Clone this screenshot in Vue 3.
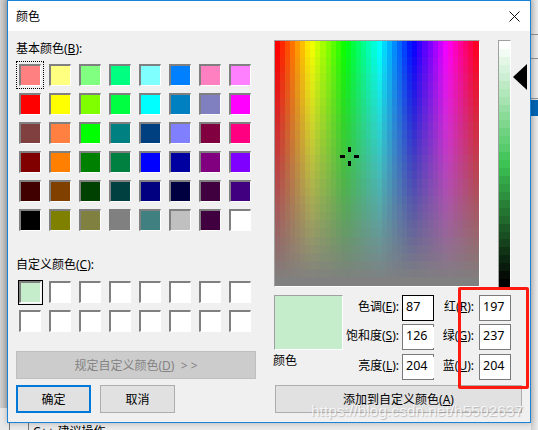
<script setup>
import { ref, onMounted } from 'vue'

const basic = [
  '#ff8080','#ffff80','#80ff80','#00ff80','#80ffff','#0080ff','#ff80c0','#ff80ff',
  '#ff0000','#ffff00','#80ff00','#00ff40','#00ffff','#0080c0','#8080c0','#ff00ff',
  '#804040','#ff8040','#00ff00','#008080','#004080','#8080ff','#800040','#ff0080',
  '#800000','#ff8000','#008000','#008040','#0000ff','#0000a0','#800080','#8000ff',
  '#400000','#804000','#004000','#004040','#000080','#000040','#400040','#400080',
  '#000000','#808000','#808040','#808080','#408080','#c0c0c0','#400040','#ffffff'
]
const custom = Array.from({ length: 16 }, (_, i) => (i === 0 ? '#c5edcc' : '#ffffff'))
const lumRows = Array.from({ length: 31 }, (_, i) => {
  const l = Math.round(100 - (i * 100) / 30)
  return `hsl(130.5deg 52.5% ${l}%)`
})

const fields = [
  { label: '色调', key: 'E', value: 87, focus: true, open: false, l2: '红', k2: 'R', v2: 197 },
  { label: '饱和度', key: 'S', value: 126, focus: false, open: true, l2: '绿', k2: 'G', v2: 237 },
  { label: '亮度', key: 'L', value: 204, focus: false, open: true, l2: '蓝', k2: 'U', v2: 204 }
]

const spectrum = ref(null)
onMounted(() => {
  const c = spectrum.value
  const ctx = c.getContext('2d')
  const cols = 40
  const rows = 30
  for (let y = 0; y < rows; y++) {
    for (let x = 0; x < cols; x++) {
      const h = (x / cols) * 360
      const s = 100 - (y / (rows - 1)) * 100
      ctx.fillStyle = `hsl(${h}deg ${s}% 50%)`
      const x0 = Math.floor((x * c.width) / cols)
      const x1 = Math.floor(((x + 1) * c.width) / cols)
      const y0 = Math.floor((y * c.height) / rows)
      const y1 = Math.floor(((y + 1) * c.height) / rows)
      ctx.fillRect(x0, y0, x1 - x0, y1 - y0)
    }
  }
})
</script>

<template>
  <div class="page">
    <div class="backdrop-left"></div>
    <div class="backdrop-right">
      <i class="line l1"></i><i class="line l2"></i><i class="line l3"></i><i class="selected"></i>
    </div>
    <div class="backdrop-bottom"><i class="vline v1"></i><i class="vline v2"></i><span class="under">C++ 建议操作</span></div>

    <section class="dialog">
      <header class="titlebar">
        <span>颜色</span>
        <svg class="close" width="11" height="11" viewBox="0 0 11 11"><path d="M.5.5l10 10M10.5.5l-10 10" stroke="#111" stroke-width="1" fill="none"/></svg>
      </header>
      <div class="body">
        <div class="left">
          <div class="lbl first">基本颜色(<u>B</u>):</div>
          <div class="swatches">
            <div v-for="(c, i) in basic" :key="i" class="swatch" :class="{ dotted: i === 0 }">
              <div class="fill" :style="{ background: c }"></div>
            </div>
          </div>
          <div class="lbl second">自定义颜色(<u>C</u>):</div>
          <div class="swatches customs">
            <div v-for="(c, i) in custom" :key="i" class="swatch" :class="{ chosen: i === 0 }">
              <div class="fill" :style="{ background: c }"></div>
            </div>
          </div>
          <button class="btn disabled">规定自定义颜色(<u>D</u>)&nbsp;&nbsp;&gt;&nbsp;&gt;</button>
          <div class="actions">
            <button class="btn primary">确定</button>
            <button class="btn">取消</button>
          </div>
        </div>

        <div class="right">
          <div class="pickers">
            <div class="spectrum-wrap">
              <canvas ref="spectrum" class="spectrum" width="204" height="245"></canvas>
              <div class="cross"><i class="c-t"></i><i class="c-b"></i><i class="c-l"></i><i class="c-r"></i></div>
            </div>
            <div class="lumbar">
              <div v-for="(c, i) in lumRows" :key="i" class="lumrow" :style="{ background: c }"></div>
            </div>
            <div class="arrow"></div>
          </div>
          <div class="values">
            <div class="preview-col">
              <div class="preview"></div>
              <div class="caption">颜色</div>
            </div>
            <div class="fields">
              <template v-for="f in fields" :key="f.key">
                <span class="flabel">{{ f.label }}(<u>{{ f.key }}</u>):</span>
                <div class="input" :class="{ focus: f.focus, open: f.open }">{{ f.value }}</div>
                <span class="flabel second-label">{{ f.l2 }}(<u>{{ f.k2 }}</u>):</span>
                <div class="input">{{ f.v2 }}</div>
              </template>
            </div>
          </div>
          <button class="btn add">添加到自定义颜色(<u>A</u>)</button>
        </div>
      </div>
    </section>

    <div class="redbox"></div>
    <div class="watermark">https://blog.csdn.net/h5502637</div>
  </div>
</template>

<style>
html, body { margin: 0; padding: 0; background: #fff; }
</style>

<style scoped>
.page {
  position: relative;
  width: 538px;
  height: 430px;
  overflow: hidden;
  background: #f4f4f4;
  font-family: "Noto Sans", "Noto Sans CJK SC", sans-serif;
  font-size: 12px;
  color: #000;
}
.backdrop-left {
  position: absolute;
  left: 0; top: 0;
  width: 7px; height: 408px;
  background: linear-gradient(90deg, #d2d2d2, #b4b4b4);
}
.backdrop-right {
  position: absolute;
  left: 531px; top: 0;
  width: 7px; height: 430px;
  background: linear-gradient(90deg, #cfcfcf, #ececec);
}
.line { position: absolute; left: 0; width: 7px; height: 1px; background: #8f8f8f; }
.l1 { top: 34px; }
.l2 { top: 58px; }
.l3 { top: 98px; }
.selected { position: absolute; left: 0; top: 100px; width: 7px; height: 16px; background: #0063b1; }
.backdrop-bottom {
  position: absolute;
  left: 0; top: 408px;
  width: 531px; height: 22px;
  background: #e9e9e9;
}
.vline { position: absolute; top: 15px; width: 1px; height: 8px; background: #777; }
.v1 { left: 9px; }
.v2 { left: 28px; }
.under { position: absolute; left: 33px; top: 16px; line-height: 16px; }

.dialog {
  position: absolute;
  left: 7px; top: 0;
  width: 522px;
  height: 421px;
  border: 1px solid #1883d7;
  background: #f0f0f0;
  display: flex;
  flex-direction: column;
  box-shadow: 0 0 6px rgba(0, 0, 0, .25);
}
.titlebar {
  height: 30px;
  flex: none;
  background: #fff;
  padding: 0 10px 0 8px;
  display: flex;
  align-items: center;
  justify-content: space-between;
}
.close { display: block; }
.body {
  flex: 1;
  display: flex;
  gap: 18px;
  padding-left: 8px;
}
.left { width: 240px; flex: none; display: flex; flex-direction: column; }
.lbl { line-height: 16px; height: 16px; }
.first { margin-top: 10px; }
.second { margin-top: 26px; }
.swatches {
  margin: 7px 0 0 3px;
  display: grid;
  grid-template-columns: repeat(8, 22px);
  grid-auto-rows: 22px;
  column-gap: 8px;
  row-gap: 7px;
}
.customs { margin-top: 8px; }
.swatch {
  position: relative;
  box-sizing: border-box;
  border: 1px solid;
  border-width: 2px 1px 1px 2px;
  border-color: #808080 #fff #fff #808080;
}
.fill { width: 100%; height: 100%; }
.dotted::after {
  content: "";
  position: absolute;
  left: -5px; top: -5px; right: -4px; bottom: -4px;
  border: 1px dotted #000;
}
.chosen::after {
  content: "";
  position: absolute;
  left: -3px; top: -3px; right: -3px; bottom: -3px;
  border: 1px solid #000;
}
.btn {
  box-sizing: border-box;
  height: 28px;
  padding: 0;
  border: 1px solid #adadad;
  background: #e1e1e1;
  font: inherit;
  color: #000;
}
.disabled {
  margin-top: 19px;
  background: #ccc;
  border-color: #bfbfbf;
  color: #838383;
  width: 240px;
}
.actions { margin-top: 6px; display: flex; gap: 9px; }
.actions .btn { width: 75px; }
.primary { border: 2px solid #0078d7; }

.right { width: 248px; flex: none; display: flex; flex-direction: column; }
.pickers { position: relative; margin-top: 9px; display: flex; gap: 18px; height: 247px; }
.spectrum-wrap {
  position: relative;
  width: 206px;
  height: 247px;
  box-sizing: border-box;
  border-style: solid;
  border-width: 1px;
  border-color: #a0a0a0 #fff #fff #a0a0a0;
}
.spectrum { display: block; width: 204px; height: 245px; }
.cross { position: absolute; left: 74px; top: 115px; width: 1px; height: 1px; }
.cross i { position: absolute; background: #000; }
.c-t, .c-b { width: 3px; height: 5px; left: -1px; }
.c-l, .c-r { width: 5px; height: 3px; top: -1px; }
.c-t { top: -9px; } .c-b { top: 5px; }
.c-l { left: -9px; } .c-r { left: 5px; }
.lumbar {
  width: 13px;
  height: 247px;
  box-sizing: border-box;
  border-style: solid;
  border-width: 1px 1px 0 1px;
  border-color: #a0a0a0 #fff #fff #a0a0a0;
  display: flex;
  flex-direction: column;
  overflow: hidden;
}
.lumrow { flex: 1; }
.arrow {
  position: absolute;
  left: 239px; top: 24px;
  width: 0; height: 0;
  border-style: solid;
  border-width: 13.5px 14px 13.5px 0;
  border-color: transparent #000 transparent transparent;
}
.values { margin-top: 8px; display: flex; height: 85px; }
.preview-col { width: 69px; flex: none; }
.preview {
  box-sizing: border-box;
  height: 55px;
  background: #c5edcc;
  border-style: solid;
  border-width: 1px;
  border-color: #a0a0a0 #fff #fff #a0a0a0;
}
.caption { margin: 3px 0 0 -1px; line-height: 16px; }
.fields {
  display: grid;
  grid-template-columns: 59px 32px 45px 32px;
  grid-template-rows: 29px 30px 26px;
}
.flabel { text-align: right; padding-right: 3px; line-height: 24px; white-space: nowrap; }
.second-label { padding-right: 5px; }
.input {
  position: relative;
  box-sizing: border-box;
  height: 26px;
  background: #fff;
  border: 1px solid #7a7a7a;
  padding-left: 3px;
  line-height: 21px;
  font-size: 12.5px;
}
.input.focus { border-color: #000; }
.input.open { border-right-color: #fff; }
.input.open::after {
  content: "";
  position: absolute;
  right: -1px; top: -1px; bottom: -1px;
  width: 1px;
  background: linear-gradient(#7a7a7a 3px, transparent 3px, transparent calc(100% - 2px), #7a7a7a 0);
}
.add { margin-top: 5px; width: 247px; margin-left: 1px; }

.redbox {
  position: absolute;
  left: 458px; top: 287px;
  width: 65px; height: 96px;
  border: 3px solid #ff1a0f;
  border-radius: 2px;
}
.watermark {
  position: absolute;
  left: 311px; top: 402px;
  font-family: "Liberation Sans", sans-serif;
  font-size: 15.5px;
  line-height: 18px;
  white-space: nowrap;
  color: rgba(255, 255, 255, .75);
  text-shadow: 1px 1px 1px rgba(140, 140, 140, .5);
}
</style>
